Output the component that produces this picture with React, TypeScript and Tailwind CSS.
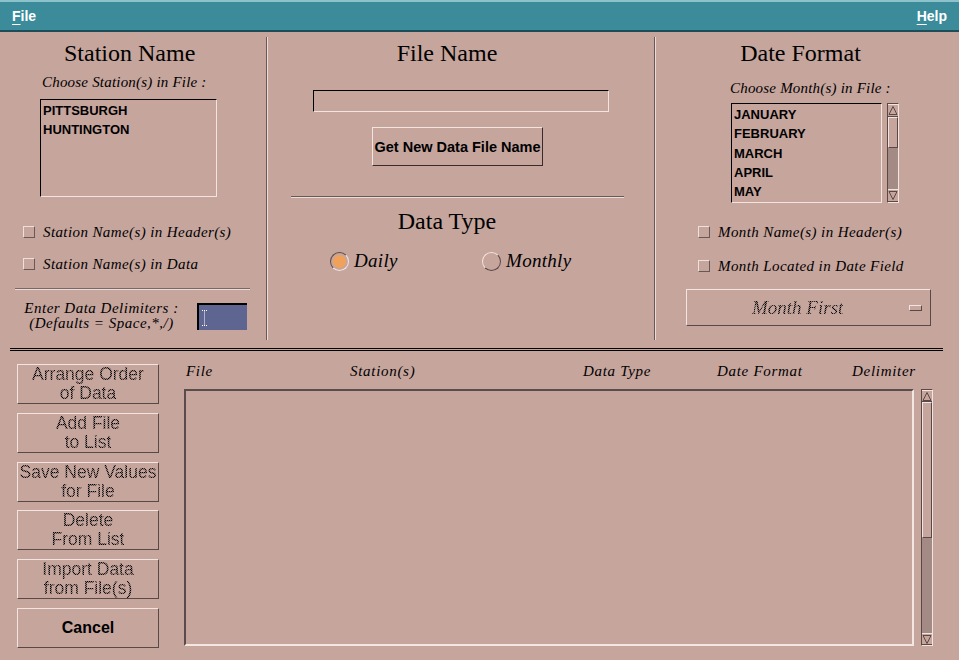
import React from "react";

const serif = "font-['Liberation_Serif','Times_New_Roman',serif]";
const sans = "font-['Liberation_Sans',Arial,sans-serif]";
const stipple =
  "bg-[repeating-conic-gradient(#000000_0%_25%,#8a7470_0%_50%)] bg-[length:2px_2px] bg-clip-text text-transparent";

function Checkbox({ label }: { label: string }) {
  return (
    <div className="flex items-center h-[18px]">
      <div className="w-[12px] h-[12px] border border-t-[#eee0dc] border-l-[#eee0dc] border-b-[#6a5856] border-r-[#6a5856]" />
      <span className={`${serif} italic text-[15px] leading-[18px] tracking-[0.4px] ml-[8px] text-black whitespace-nowrap`}>{label}</span>
    </div>
  );
}

function Arrow({ up }: { up: boolean }) {
  return (
    <svg width="10" height="11" viewBox="0 0 10 11" className="block">
      {up ? (
        <polygon points="5,1.5 9,9.5 1,9.5" fill="none" stroke="#5a4846" strokeWidth="1" />
      ) : (
        <polygon points="1,1.5 9,1.5 5,9.5" fill="none" stroke="#5a4846" strokeWidth="1" />
      )}
    </svg>
  );
}

function ScrollBar({ w, h, arrow, thumb }: { w: number; h: number; arrow: number; thumb: number }) {
  return (
    <div
      className="flex flex-col border border-t-[#5a4846] border-l-[#5a4846] border-b-[#f2e4e0] border-r-[#f2e4e0] bg-[#a38a85]"
      style={{ width: w, height: h }}
    >
      <div
        className="flex items-center justify-center bg-[#c6a59d] border-b border-b-[#5a4846] border-t border-t-[#f2e4e0]"
        style={{ height: arrow }}
      >
        <Arrow up />
      </div>
      <div
        className="bg-[#c6a59d] border border-t-[#f2e4e0] border-l-[#f2e4e0] border-b-[#5a4846] border-r-[#5a4846]"
        style={{ height: thumb }}
      />
      <div className="flex-1" />
      <div
        className="flex items-center justify-center bg-[#c6a59d] border-t border-t-[#f2e4e0] border-b border-b-[#5a4846]"
        style={{ height: arrow }}
      >
        <Arrow up={false} />
      </div>
    </div>
  );
}

function DisabledButton({ lines }: { lines: string[] }) {
  return (
    <div className="w-[142px] h-[40px] flex flex-col items-center justify-center border border-t-[#f2e4e0] border-l-[#f2e4e0] border-b-[#5a4846] border-r-[#5a4846]">
      {lines.map((l) => (
        <span key={l} className={`${sans} ${stipple} text-[17.5px] leading-[19px] whitespace-nowrap`}>
          {l}
        </span>
      ))}
    </div>
  );
}

export default function App() {
  return (
    <div className="w-[959px] h-[660px] bg-[#c6a59d] overflow-hidden relative text-black">
      {/* Menu bar */}
      <div className="h-[32px] bg-[#3b8b9a] border-t-2 border-t-[#8cc2ca] border-b-2 border-b-[#1d4d58] flex items-center justify-between px-[12px]">
        <span className={`${sans} font-bold text-[14px] text-white leading-[16px]`}>
          <span className="underline underline-offset-[3px]">F</span>ile
        </span>
        <span className={`${sans} font-bold text-[14px] text-white leading-[16px]`}>
          <span className="underline underline-offset-[3px]">H</span>elp
        </span>
      </div>

      {/* Top section */}
      <div className="flex h-[308px] pt-[5px]">
        {/* Left column */}
        <div className="w-[266px] flex flex-col">
          <div className={`${serif} text-[24px] leading-[28px] mt-[2px] ml-[64px] whitespace-nowrap`}>Station Name</div>
          <div className={`${serif} italic text-[15px] leading-[18px] tracking-[0.2px] mt-[6px] ml-[42px] whitespace-nowrap`}>
            Choose Station(s) in File :
          </div>
          <div className="mt-[8px] ml-[40px] w-[177px] h-[98px] border border-t-black border-l-black border-b-[#f2e4e0] border-r-[#f2e4e0] pt-[1px] pl-[2px]">
            <div className={`${sans} font-bold text-[13px] leading-[19px]`}>PITTSBURGH</div>
            <div className={`${sans} font-bold text-[13px] leading-[19px]`}>HUNTINGTON</div>
          </div>
          <div className="mt-[26px] ml-[23px]">
            <Checkbox label="Station Name(s) in Header(s)" />
          </div>
          <div className="mt-[14px] ml-[23px]">
            <Checkbox label="Station Name(s) in Data" />
          </div>
          <div className="mt-[15px] ml-[15px] w-[235px] h-[2px] border-t border-t-[#7a6866] border-b border-b-[#ecdcd8]" />
          <div className="flex mt-[11px]">
            <div className={`${serif} italic text-[15px] leading-[15px] tracking-[0.5px] ml-[20px] w-[163px] text-center whitespace-nowrap`}>
              <div>Enter Data Delimiters :</div>
              <div>(Defaults = Space,*,/)</div>
            </div>
            <div className="ml-[14px] mt-[2px] w-[50px] h-[27px] bg-[#5e6590] border-t-2 border-l-2 border-t-black border-l-black flex items-center pl-[3px]">
              <svg width="5" height="16" viewBox="0 0 5 16">
                <path d="M0 0.5H5M2.5 0.5V15.5M0 15.5H5" stroke="#ffffff" strokeWidth="1" strokeDasharray="1 1" fill="none" />
              </svg>
            </div>
          </div>
        </div>

        <div className="w-[2px] border-l border-l-[#6a5856] border-r border-r-[#ecdcd8]" />

        {/* Center column */}
        <div className="w-[386px] flex flex-col">
          <div className={`${serif} text-[24px] leading-[28px] mt-[2px] text-center pr-[28px] whitespace-nowrap`}>File Name</div>
          <div className="mt-[23px] ml-[45px] w-[296px] h-[22px] border border-t-black border-l-black border-b-[#f2e4e0] border-r-[#f2e4e0]" />
          <div className="mt-[15px] ml-[104px] w-[171px] h-[39px] flex items-center justify-center border border-t-[#f2e4e0] border-l-[#f2e4e0] border-b-[#3a2a2a] border-r-[#3a2a2a]">
            <span className={`${sans} font-bold text-[14.5px] leading-[16px] whitespace-nowrap`}>Get New Data File Name</span>
          </div>
          <div className="mt-[30px] ml-[23px] w-[333px] h-[2px] border-t border-t-[#6a5856] border-b border-b-[#ecdcd8]" />
          <div className={`${serif} text-[24px] leading-[28px] mt-[9px] text-center pr-[28px] whitespace-nowrap`}>Data Type</div>
          <div className="flex mt-[15px] ml-[62px] h-[22px] items-center">
            <div className="w-[152px] flex items-center">
              <div className="w-[19px] h-[19px] rounded-full border border-t-[#5a4846] border-l-[#5a4846] border-b-[#f2e4e0] border-r-[#f2e4e0] flex items-center justify-center">
                <div className="w-[13px] h-[13px] rounded-full bg-[#f0a25a]" />
              </div>
              <span className={`${serif} italic text-[19px] leading-[22px] tracking-[0.3px] ml-[5px]`}>Daily</span>
            </div>
            <div className="flex items-center">
              <div className="w-[19px] h-[19px] rounded-full border border-t-[#f2e4e0] border-l-[#f2e4e0] border-b-[#5a4846] border-r-[#5a4846]" />
              <span className={`${serif} italic text-[19px] leading-[22px] tracking-[0.3px] ml-[5px]`}>Monthly</span>
            </div>
          </div>
        </div>

        <div className="w-[2px] border-l border-l-[#6a5856] border-r border-r-[#ecdcd8]" />

        {/* Right column */}
        <div className="flex-1 flex flex-col">
          <div className={`${serif} text-[24px] leading-[28px] mt-[2px] text-center pr-[14px] whitespace-nowrap`}>Date Format</div>
          <div className={`${serif} italic text-[15px] leading-[18px] tracking-[0.2px] mt-[12px] ml-[74px] whitespace-nowrap`}>
            Choose Month(s) in File :
          </div>
          <div className="flex mt-[6px] ml-[75px]">
            <div className="w-[151px] h-[100px] border border-t-black border-l-black border-b-[#f2e4e0] border-r-[#f2e4e0] pt-[1px] pl-[2px] overflow-hidden">
              {["JANUARY", "FEBRUARY", "MARCH", "APRIL", "MAY"].map((m) => (
                <div key={m} className={`${sans} font-bold text-[13px] leading-[19.3px]`}>
                  {m}
                </div>
              ))}
            </div>
            <div className="ml-[5px]">
              <ScrollBar w={12} h={100} arrow={13} thumb={31} />
            </div>
          </div>
          <div className="mt-[20px] ml-[42px]">
            <Checkbox label="Month Name(s) in Header(s)" />
          </div>
          <div className="mt-[16px] ml-[42px]">
            <Checkbox label="Month Located  in Date Field" />
          </div>
          <div className="mt-[14px] ml-[30px] w-[245px] h-[37px] flex items-center border border-t-[#f2e4e0] border-l-[#f2e4e0] border-b-[#5a4846] border-r-[#5a4846]">
            <span className={`${serif} ${stipple} italic text-[19px] leading-[22px] pl-[65px] whitespace-nowrap`}>Month First</span>
            <div className="ml-auto mr-[8px] w-[13px] h-[6px] border border-t-[#f2e4e0] border-l-[#f2e4e0] border-b-[#5a4846] border-r-[#5a4846]" />
          </div>
        </div>
      </div>

      {/* Double separator */}
      <div className="mt-[8px] ml-[10px] w-[933px] h-[3px] border-t border-b border-black" />

      {/* Bottom section */}
      <div className="flex">
        <div className="ml-[17px] pt-[13px] flex flex-col gap-[8.8px]">
          <DisabledButton lines={["Arrange Order", "of Data"]} />
          <DisabledButton lines={["Add File", "to List"]} />
          <DisabledButton lines={["Save New Values", "for File"]} />
          <DisabledButton lines={["Delete", "From List"]} />
          <DisabledButton lines={["Import Data", "from File(s)"]} />
          <div className="w-[142px] h-[40px] flex items-center justify-center border border-t-[#f2e4e0] border-l-[#f2e4e0] border-b-[#5a4846] border-r-[#5a4846]">
            <span className={`${sans} font-bold text-[16px] leading-[18px]`}>Cancel</span>
          </div>
        </div>
        <div className="ml-[25px] flex flex-col pt-[11px]">
          <div className={`${serif} italic text-[15px] leading-[18px] tracking-[0.7px] flex whitespace-nowrap`}>
            <span className="ml-[2px] w-[164px]">File</span>
            <span className="w-[233px]">Station(s)</span>
            <span className="w-[134px]">Data Type</span>
            <span className="w-[135px]">Date Format</span>
            <span>Delimiter</span>
          </div>
          <div className="flex mt-[9px]">
            <div className="w-[730px] h-[257px] border-2 border-t-[#5a4c4a] border-l-[#5a4c4a] border-b-[#f4e6e2] border-r-[#f4e6e2]" />
            <div className="ml-[7px]">
              <ScrollBar w={12} h={257} arrow={12} thumb={136} />
            </div>
          </div>
        </div>
      </div>
    </div>
  );
}
